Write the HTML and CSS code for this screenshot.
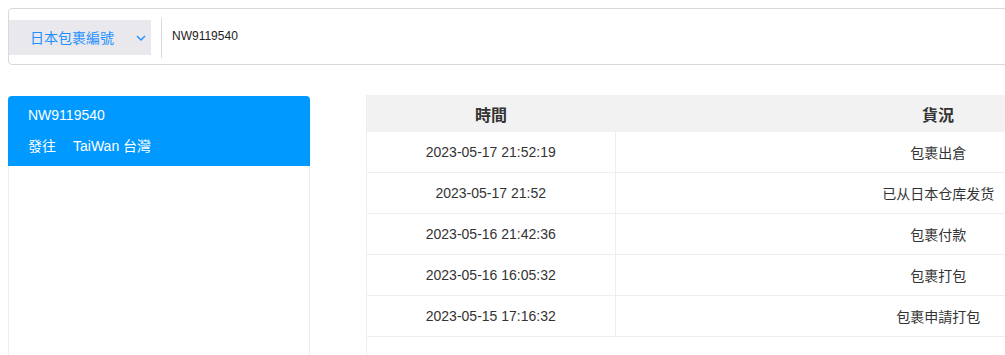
FILE: index.html
```html
<!DOCTYPE html>
<html lang="zh-Hant">
<head>
<meta charset="utf-8">
<title>包裹查詢</title>
<link rel="stylesheet" href="styles.css">
</head>
<body>
<div class="page">
  <div class="searchbar">
    <div class="select">
      <span class="select-label">日本包裹編號</span>
      <svg class="chev" width="10" height="6" viewBox="0 0 10 6"><path d="M1 1 L5 5 L9 1" fill="none" stroke="#1e90ff" stroke-width="1.4"/></svg>
    </div>
    <div class="divider"></div>
    <div class="input">NW9119540</div>
  </div>
  <div class="main">
    <div class="card">
      <div class="card-head">
        <div class="card-no">NW9119540</div>
        <div class="card-dest"><span>發往</span><span>TaiWan 台灣</span></div>
      </div>
      <div class="card-body"></div>
    </div>
    <div class="table-wrap">
      <table class="track">
        <thead>
          <tr><th class="c1">時間</th><th class="c2">貨況</th></tr>
        </thead>
        <tbody>
          <tr><td>2023-05-17 21:52:19</td><td>包裹出倉</td></tr>
          <tr><td>2023-05-17 21:52</td><td>已从日本仓库发货</td></tr>
          <tr><td>2023-05-16 21:42:36</td><td>包裹付款</td></tr>
          <tr><td>2023-05-16 16:05:32</td><td>包裹打包</td></tr>
          <tr><td>2023-05-15 17:16:32</td><td>包裹申請打包</td></tr>
        </tbody>
      </table>
    </div>
  </div>
</div>
</body>
</html>
```

FILE: styles.css
```css
html, body {
  margin: 0;
  padding: 0;
  overflow: hidden;
}
body {
  font-family: "Liberation Sans", Arial, "Noto Sans CJK TC", sans-serif;
  color: #333;
  background: #fff;
}
.page {
  width: 1005px;
  height: 355px;
  padding: 8px 0 0 8px;
  box-sizing: border-box;
  overflow: hidden;
}
.searchbar {
  display: flex;
  align-items: center;
  width: 1300px;
  height: 55px;
  border: 1px solid #d9d9d9;
  border-radius: 4px;
}
.select {
  display: flex;
  flex: none;
  align-items: center;
  justify-content: space-between;
  width: 142px;
  height: 35px;
  box-sizing: border-box;
  padding: 0 5px 0 21px;
  background: #e8e8ed;
  color: #1e90ff;
  font-size: 14px;
  margin-top: 1px;
}
.chev {
  margin-top: 2px;
}
.divider {
  flex: none;
  width: 1px;
  height: 40px;
  background: #dcdcdc;
  margin-left: 10px;
  margin-top: 2px;
}
.input {
  margin-left: 10px;
  font-size: 12px;
  color: #222;
  margin-bottom: 1px;
}
.main {
  display: flex;
  align-items: flex-start;
  gap: 56px;
  margin-top: 30px;
}
.card {
  flex: none;
  width: 302px;
  height: 270px;
  box-sizing: border-box;
  border: 1px solid #eee;
  border-top: none;
  border-radius: 4px 4px 0 0;
  margin-top: 1px;
}
.card-head {
  background: #0099ff;
  color: #fff;
  font-size: 14px;
  padding: 11px 20px 0;
  height: 70px;
  box-sizing: border-box;
  border-radius: 4px 4px 0 0;
  margin: 0 -1px;
}
.card-no {
  line-height: 16px;
}
.card-dest {
  display: flex;
  gap: 17px;
  margin-top: 15px;
  line-height: 16px;
}
.table-wrap {
  flex: none;
  width: 895px;
  min-height: 270px;
  border-left: 1px solid #eee;
  box-sizing: border-box;
}
.track {
  width: 100%;
  border-collapse: collapse;
  font-size: 14px;
  color: #333;
}
.track th {
  background: #f2f2f2;
  height: 37px;
  font-size: 16px;
  font-weight: bold;
  color: #333;
  padding: 0;
  text-align: center;
}
.track th.c1 {
  width: 248px;
}
.track td {
  height: 40px;
  padding: 0;
  text-align: center;
  border-bottom: 1px solid #eee;
}
.track td:first-child {
  border-right: 1px solid #eee;
}
```
